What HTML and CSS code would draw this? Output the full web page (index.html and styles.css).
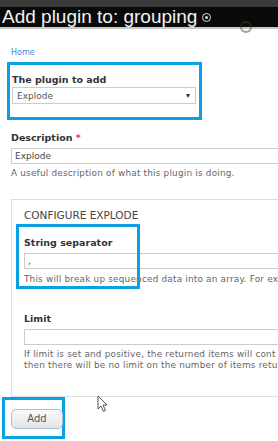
FILE: index.html
```html
<!DOCTYPE html>
<html lang="en">
<head>
    <meta charset="UTF-8">
    <title>Add plugin to: grouping</title>
    <link rel="stylesheet" href="styles.css">
</head>
<body>
    <div class="top-strip"></div>
    <div class="title-bar">
        <h1>Add plugin to: grouping</h1>
        <span class="title-icon"></span>
        <span class="ghost-ring"></span>
    </div>

    <div class="page">
        <div class="breadcrumb"><a href="#">Home</a></div>

        <div class="mark mark-plugin">
            <label class="field-label">The plugin to add</label>
            <div class="select-box">
                <span>Explode</span>
                <span class="arrow">&#9662;</span>
            </div>
        </div>

        <div class="field field-description">
            <label class="field-label">Description <span class="req">*</span></label>
            <div class="text-input wide">Explode</div>
            <div class="help">A useful description of what this plugin is doing.</div>
        </div>

        <div class="fieldset">
            <div class="legend">CONFIGURE EXPLODE</div>

            <div class="field field-separator">
                <label class="field-label">String separator</label>
                <div class="text-input">,</div>
                <div class="help">This will break up sequenced data into an array. For ex</div>
                <div class="mark-overlay"></div>
            </div>

            <div class="field field-limit">
                <label class="field-label">Limit</label>
                <div class="text-input"></div>
                <div class="help">If limit is set and positive, the returned items will cont<br>then there will be no limit on the number of items retu</div>
            </div>
        </div>

        <div class="mark mark-add">
            <button class="add-button">Add</button>
        </div>

        <svg class="cursor" width="12" height="18" viewBox="0 0 12 18">
            <path d="M1 1 L1 14 L4 11 L6.5 16.5 L8.5 15.5 L6 10 L10 10 Z" fill="#fff" stroke="#555" stroke-width="1"/>
        </svg>
    </div>
</body>
</html>
```

FILE: styles.css
```css
body {
    margin: 0;
    width: 278px;
    height: 441px;
    overflow: hidden;
    background-color: #fff;
    font-family: "DejaVu Sans", "Open Sans", sans-serif;
    color: #333;
    position: relative;
}
.top-strip {
    height: 7px;
    background-color: #3a3a3a;
}
.title-bar {
    height: 20px;
    background-color: #0a0a0a;
    border-bottom: 2px solid #c8c8c8;
    display: flex;
    align-items: center;
    position: relative;
}
.title-bar h1 {
    margin: 0 0 0 2px;
    font-family: "Liberation Sans", Arial, sans-serif;
    font-weight: normal;
    font-size: 19px;
    color: #f2f2f2;
    line-height: 20px;
}
.title-icon {
    width: 7px;
    height: 7px;
    border: 1.5px solid #ddd;
    border-radius: 50%;
    margin-left: 5px;
    margin-top: 1px;
    position: relative;
}
.title-icon::after {
    content: "";
    position: absolute;
    left: 2px;
    top: 2px;
    width: 3px;
    height: 3px;
    border-radius: 50%;
    background-color: #ddd;
}
.ghost-ring {
    position: absolute;
    left: 240px;
    top: 14px;
    width: 8px;
    height: 8px;
    border: 2px solid #2f4a22;
    border-radius: 50%;
    opacity: 0.5;
}
.page {
    padding-left: 11px;
    position: relative;
}
.breadcrumb {
    font-size: 8px;
    padding-top: 19px;
    height: 14px;
}
.breadcrumb a {
    color: #3a8ad6;
    text-decoration: none;
}
.mark {
    border: 3px solid #0aa0e2;
}
.mark-plugin {
    margin-left: -4px;
    width: 187px;
    padding: 9px 0 13px 2px;
}
.field-label {
    display: block;
    font-size: 9.5px;
    font-weight: bold;
    color: #333;
    line-height: 12px;
    margin-bottom: 4px;
}
.mark-plugin .field-label {
    margin-bottom: 1px;
}
.req {
    color: #e04040;
}
.select-box {
    width: 178px;
    height: 15px;
    border: 1px solid #ccc;
    box-sizing: content-box;
    font-size: 9px;
    color: #555;
    display: flex;
    align-items: center;
    justify-content: space-between;
    padding: 0 0 0 4px;
}
.select-box .arrow {
    font-size: 8px;
    color: #333;
    margin-right: 5px;
}
.field-description {
    margin-top: 12px;
}
.text-input {
    width: 400px;
    height: 14px;
    border: 1px solid #ccc;
    font-size: 9px;
    color: #444;
    padding-left: 3px;
    line-height: 14px;
}
.help {
    font-size: 8.9px;
    color: #666;
    line-height: 11px;
    margin-top: 4px;
    letter-spacing: 0.2px;
    white-space: nowrap;
}
.fieldset {
    margin-top: 20px;
    width: 420px;
    height: 198px;
    border: 1px solid #ddd;
    box-sizing: border-box;
    padding: 9px 0 0 12px;
}
.legend {
    font-size: 10.5px;
    color: #444;
    line-height: 12px;
}
.field-separator {
    margin-top: 16px;
    position: relative;
}
.field-separator .help {
    margin-top: 5px;
}
.mark-overlay {
    position: absolute;
    left: -8px;
    top: -13px;
    width: 118px;
    height: 59px;
    border: 3px solid #0aa0e2;
}
.field-limit {
    margin-top: 28px;
}
.mark-add {
    margin-left: -9px;
    width: 63px;
    height: 42px;
    box-sizing: border-box;
    padding: 7px 0 0 6px;
}
.add-button {
    width: 52px;
    height: 20px;
    border: 1px solid #a9bde0;
    border-radius: 5px;
    background: linear-gradient(#fafafa, #e4e4e4);
    font-family: "DejaVu Sans", "Open Sans", sans-serif;
    font-size: 10px;
    color: #555;
    padding: 0;
}
.cursor {
    position: absolute;
    left: 97px;
    top: 366px;
}
```
